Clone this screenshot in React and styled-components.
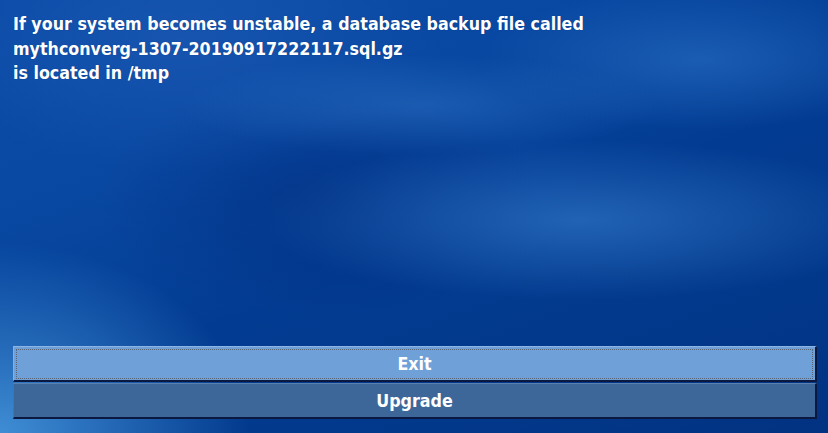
import React from "react";
import styled, { createGlobalStyle } from "styled-components";

const GlobalStyle = createGlobalStyle`
  html, body {
    margin: 0;
    padding: 0;
    width: 100%;
    height: 100%;
    overflow: hidden;
  }
  #root {
    height: 100%;
  }
`;

const Screen = styled.div`
  width: 828px;
  height: 433px;
  box-sizing: border-box;
  padding: 12px 11px 14px 13px;
  display: flex;
  flex-direction: column;
  justify-content: space-between;
  font-family: "DejaVu Sans Condensed", "DejaVu Sans", sans-serif;
  color: #ffffff;
  background:
    radial-gradient(ellipse 240px 50px at 420px 105px, rgba(55, 125, 205, 0.4), transparent),
    radial-gradient(ellipse 320px 80px at 580px 220px, rgba(55, 125, 205, 0.6), transparent),
    radial-gradient(ellipse 220px 70px at 700px 60px, rgba(45, 115, 200, 0.55), transparent),
    radial-gradient(ellipse 250px 190px at 0px 433px, rgba(70, 150, 220, 0.9), transparent),
    radial-gradient(ellipse 260px 130px at 180px 40px, rgba(35, 95, 185, 0.5), transparent),
    radial-gradient(ellipse 220px 120px at 320px 200px, rgba(0, 40, 120, 0.45), transparent),
    linear-gradient(160deg, #0b4ca8 0%, #0948a2 30%, #023c92 55%, #02388a 80%, #023282 100%);
`;

const Message = styled.div`
  font-size: 17.7px;
  font-weight: bold;
  line-height: 24.5px;
  white-space: pre-line;
  text-shadow: 0 0 1px rgba(0, 20, 60, 0.4);
`;

const ButtonList = styled.div`
  display: flex;
  flex-direction: column;
  gap: 1px;
`;

const Button = styled.div`
  position: relative;
  height: 36px;
  display: flex;
  align-items: center;
  justify-content: center;
  box-sizing: border-box;
  font-size: 17.7px;
  font-weight: bold;
  color: #ffffff;
  background: ${(p) => (p.$focused ? "#6fa0d8" : "#3d6799")};
  border-top: 1px solid ${(p) => (p.$focused ? "#8cb4e4" : "#5a80b0")};
  border-left: 1px solid ${(p) => (p.$focused ? "#86aedf" : "#4a72a6")};
  border-bottom: 2px solid #0b1840;
  border-right: 2px solid #0b1840;

  &::after {
    content: "";
    display: ${(p) => (p.$focused ? "block" : "none")};
    position: absolute;
    inset: 2px 2px 1px 2px;
    border: 1px dotted #5a6576;
    pointer-events: none;
  }
`;

export default function App() {
  return (
    <>
      <GlobalStyle />
      <Screen>
        <Message>
          {"If your system becomes unstable, a database backup file called\nmythconverg-1307-20190917222117.sql.gz\nis located in /tmp"}
        </Message>
        <ButtonList>
          <Button $focused>Exit</Button>
          <Button>Upgrade</Button>
        </ButtonList>
      </Screen>
    </>
  );
}
